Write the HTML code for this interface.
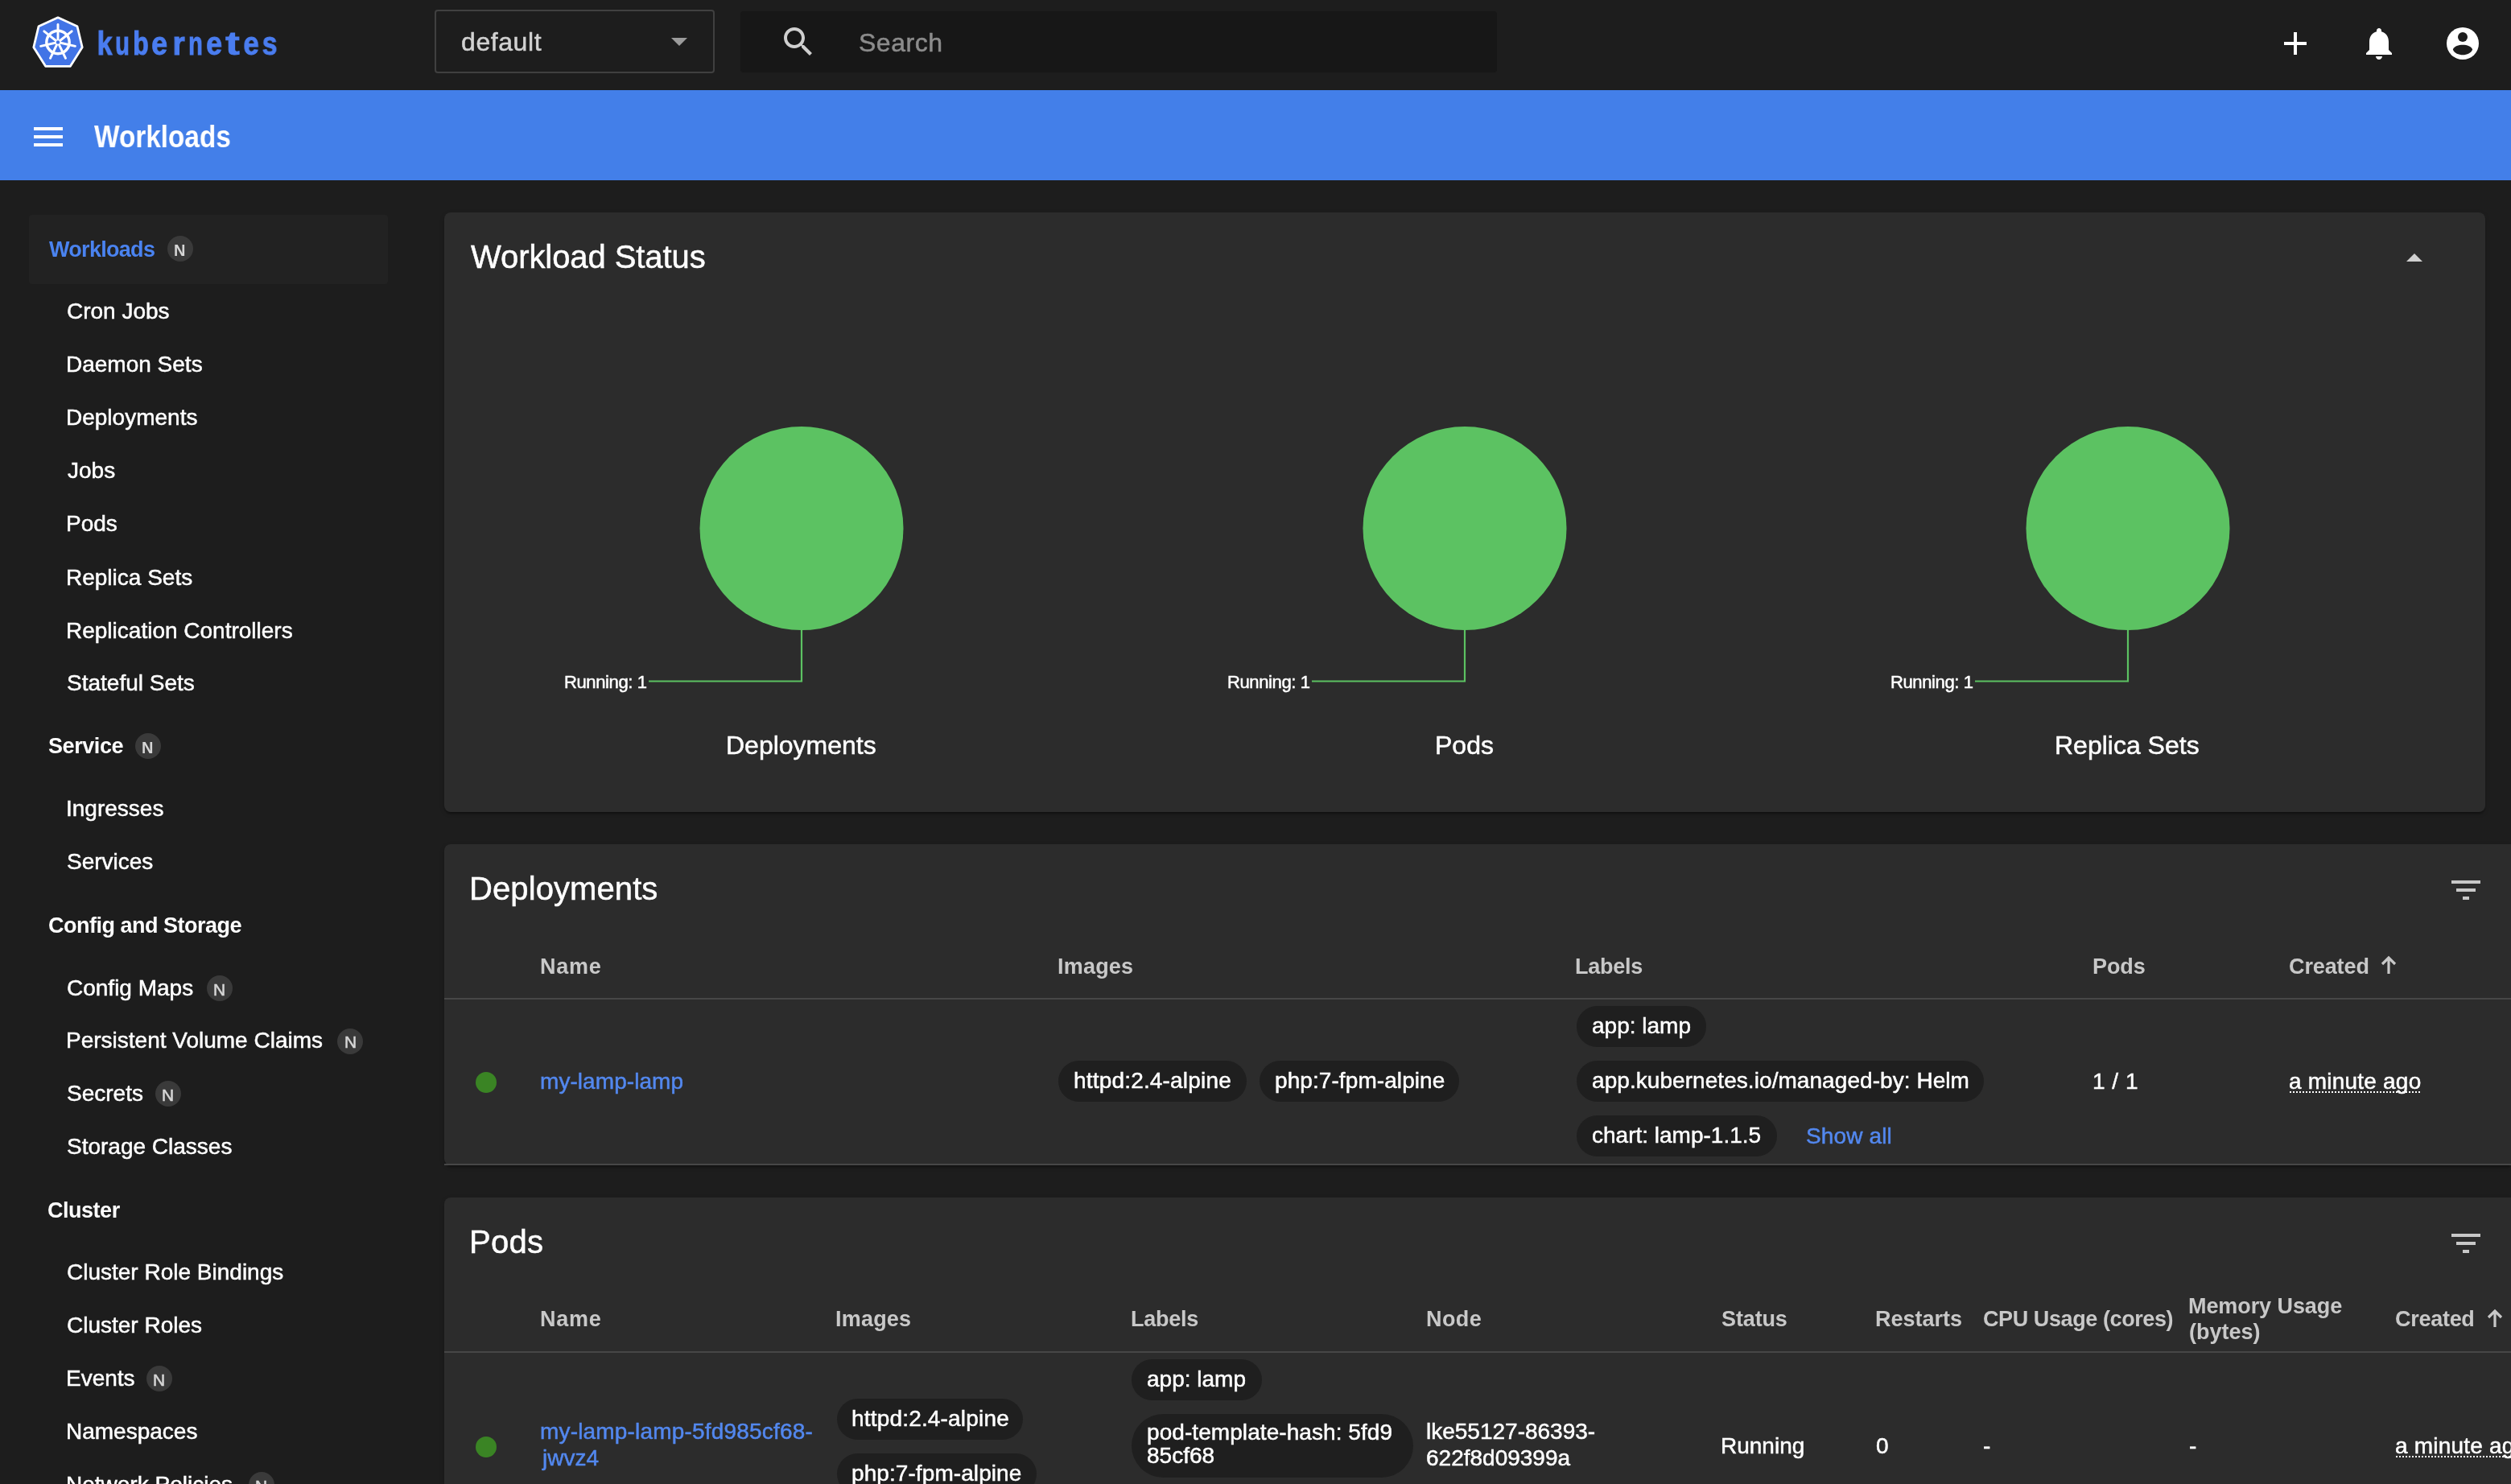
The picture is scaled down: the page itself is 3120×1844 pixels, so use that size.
<!DOCTYPE html>
<html><head><meta charset="utf-8"><title>Workloads - Kubernetes Dashboard</title>
<style>
html,body{margin:0;padding:0;width:3120px;height:1844px;overflow:hidden;background:#1d1d1d;}
#root{position:relative;width:3120px;height:1844px;overflow:hidden;background:#1d1d1d;font-family:"Liberation Sans",sans-serif;}
.t{position:absolute;line-height:1;white-space:nowrap;will-change:transform;}
.r{position:absolute;}
svg.r{overflow:visible}
</style></head><body><div id="root">
<svg class="r" style="left:38px;top:18px" width="68" height="68" viewBox="38 18 68 68">
<polygon points="72.0,21.8 96.0,32.8 102.2,58.8 87.4,82.3 56.6,82.3 41.8,58.8 48.0,32.8" fill="#4274e6" stroke="#fff" stroke-width="2.8" stroke-linejoin="round"/>
<g stroke="#fff" stroke-width="2.9" stroke-linecap="round" fill="none">
<circle cx="72" cy="52.5" r="14.2" stroke-width="3.4"/>
<line x1="72" y1="52.5" x2="72" y2="30.5"/>
<line x1="72" y1="52.5" x2="89.2" y2="38.8"/>
<line x1="72" y1="52.5" x2="93.4" y2="57.4"/>
<line x1="72" y1="52.5" x2="81.5" y2="72.3"/>
<line x1="72" y1="52.5" x2="62.5" y2="72.3"/>
<line x1="72" y1="52.5" x2="50.6" y2="57.4"/>
<line x1="72" y1="52.5" x2="54.8" y2="38.8"/>
</g>
<circle cx="72" cy="52.5" r="2.2" fill="#4274e6"/>
</svg>
<div class="t" style="left:109.5px;width:40px;text-align:center;top:34.4px;font-size:40px;font-weight:bold;color:#4a7df0;-webkit-text-stroke:1px #4a7df0;transform:scaleX(0.848)">k</div>
<div class="t" style="left:131.5px;width:40px;text-align:center;top:34.4px;font-size:40px;font-weight:bold;color:#4a7df0;-webkit-text-stroke:1px #4a7df0;transform:scaleX(0.733)">u</div>
<div class="t" style="left:155.1px;width:40px;text-align:center;top:34.4px;font-size:40px;font-weight:bold;color:#4a7df0;-webkit-text-stroke:1px #4a7df0;transform:scaleX(0.792)">b</div>
<div class="t" style="left:177.8px;width:40px;text-align:center;top:34.4px;font-size:40px;font-weight:bold;color:#4a7df0;-webkit-text-stroke:1px #4a7df0;transform:scaleX(0.886)">e</div>
<div class="t" style="left:201.7px;width:40px;text-align:center;top:34.4px;font-size:40px;font-weight:bold;color:#4a7df0;-webkit-text-stroke:1px #4a7df0;transform:scaleX(0.969)">r</div>
<div class="t" style="left:223.2px;width:40px;text-align:center;top:34.4px;font-size:40px;font-weight:bold;color:#4a7df0;-webkit-text-stroke:1px #4a7df0;transform:scaleX(0.733)">n</div>
<div class="t" style="left:246.10000000000002px;width:40px;text-align:center;top:34.4px;font-size:40px;font-weight:bold;color:#4a7df0;-webkit-text-stroke:1px #4a7df0;transform:scaleX(0.886)">e</div>
<div class="t" style="left:269px;width:40px;text-align:center;top:34.4px;font-size:40px;font-weight:bold;color:#4a7df0;-webkit-text-stroke:1px #4a7df0;transform:scaleX(1.308)">t</div>
<div class="t" style="left:292.1px;width:40px;text-align:center;top:34.4px;font-size:40px;font-weight:bold;color:#4a7df0;-webkit-text-stroke:1px #4a7df0;transform:scaleX(0.864)">e</div>
<div class="t" style="left:314.9px;width:40px;text-align:center;top:34.4px;font-size:40px;font-weight:bold;color:#4a7df0;-webkit-text-stroke:1px #4a7df0;transform:scaleX(0.841)">s</div>
<div class="r" style="left:540px;top:12px;width:348px;height:79px;background:transparent;box-sizing:border-box;border:2px solid #404040;border-radius:4px;"></div>
<div class="t" style="left:573.2px;top:36.4px;font-size:32px;color:#d2d2d2;-webkit-text-stroke:0.5px #d2d2d2;letter-spacing:0.58px;">default</div>
<svg class="r" style="left:834px;top:47px" width="20" height="10" viewBox="0 0 20 10"><polygon points="0,0 20,0 10,10" fill="#9b9b9b"/></svg>
<div class="r" style="left:920px;top:14px;width:940px;height:76px;background:#171717;border-radius:4px;"></div>
<svg class="r" style="left:968px;top:27.5px" width="48" height="48" viewBox="0 0 24 24"><path fill="#cfcfcf" d="M15.5 14h-.79l-.28-.27C15.41 12.59 16 11.11 16 9.5 16 5.91 13.09 3 9.5 3S3 5.91 3 9.5 5.91 16 9.5 16c1.61 0 3.09-.59 4.23-1.57l.27.28v.79l5 4.99L20.49 19l-4.99-5zm-6 0C7.01 14 5 11.99 5 9.5S7.01 5 9.5 5 14 7.01 14 9.5 11.99 14 9.5 14z"/></svg>
<div class="t" style="left:1066.5px;top:36.9px;font-size:32px;color:#8c8c8c;-webkit-text-stroke:0.5px #8c8c8c;letter-spacing:0.53px;">Search</div>
<svg class="r" style="left:2828px;top:30px" width="48" height="48" viewBox="0 0 24 24"><path fill="#fff" d="M19 13h-6v6h-2v-6H5v-2h6V5h2v6h6v2z"/></svg>
<svg class="r" style="left:2932px;top:30px" width="48" height="48" viewBox="0 0 24 24"><path fill="#fff" d="M12 22c1.1 0 2-.9 2-2h-4c0 1.1.89 2 2 2zm6-6v-5c0-3.07-1.64-5.64-4.5-6.32V4c0-.83-.67-1.5-1.5-1.5s-1.5.67-1.5 1.5v.68C7.63 5.36 6 7.92 6 11v5l-2 2v1h16v-1l-2-2z"/></svg>
<svg class="r" style="left:3036px;top:30px" width="48" height="48" viewBox="0 0 48 48">
<circle cx="24" cy="24" r="20" fill="#fff"/>
<circle cx="24" cy="16" r="6" fill="#1d1d1d"/>
<path d="M11.8 31.6 C14.5 23.8 33.5 23.8 36.2 31.6 C33 40.6 15 40.6 11.8 31.6Z" fill="#1d1d1d"/>
</svg>
<div class="r" style="left:0px;top:112px;width:3120px;height:112px;background:#437fe9;"></div>
<div class="r" style="left:42px;top:158px;width:36px;height:4px;background:#fff;"></div>
<div class="r" style="left:42px;top:168px;width:36px;height:4px;background:#fff;"></div>
<div class="r" style="left:42px;top:178px;width:36px;height:4px;background:#fff;"></div>
<div class="t" style="left:117.0px;top:150.6px;font-size:38px;color:#fff;transform:scaleX(0.8772);transform-origin:0 0;font-weight:bold;">Workloads</div>
<div class="r" style="left:36px;top:267px;width:446px;height:86px;background:#222222;border-radius:4px;"></div>
<div class="t" style="left:60.6px;top:296.9px;font-size:27px;color:#4a83f0;font-weight:bold;letter-spacing:-0.70px;">Workloads</div>
<div class="r" style="left:208px;top:293px;width:32px;height:32px;background:#3a3a3a;border-radius:50%;"></div>
<div class="t" style="left:216.4px;top:301.4px;font-size:20px;color:#d6d6d6;font-weight:bold;">N</div>
<div class="t" style="left:83.1px;top:373.3px;font-size:28px;color:#fff;-webkit-text-stroke:0.5px #fff;">Cron Jobs</div>
<div class="t" style="left:82.2px;top:438.8px;font-size:28px;color:#fff;-webkit-text-stroke:0.5px #fff;">Daemon Sets</div>
<div class="t" style="left:82.2px;top:504.8px;font-size:28px;color:#fff;-webkit-text-stroke:0.5px #fff;">Deployments</div>
<div class="t" style="left:84.1px;top:570.9px;font-size:28px;color:#fff;-webkit-text-stroke:0.5px #fff;">Jobs</div>
<div class="t" style="left:82.2px;top:636.9px;font-size:28px;color:#fff;-webkit-text-stroke:0.5px #fff;">Pods</div>
<div class="t" style="left:82.2px;top:703.7px;font-size:28px;color:#fff;-webkit-text-stroke:0.5px #fff;">Replica Sets</div>
<div class="t" style="left:82.2px;top:770.3px;font-size:28px;color:#fff;-webkit-text-stroke:0.5px #fff;">Replication Controllers</div>
<div class="t" style="left:83.2px;top:835.3px;font-size:28px;color:#fff;-webkit-text-stroke:0.5px #fff;">Stateful Sets</div>
<div class="t" style="left:59.9px;top:914.3px;font-size:27px;color:#fff;font-weight:bold;letter-spacing:-0.43px;">Service</div>
<div class="r" style="left:167.6px;top:911px;width:32px;height:32px;background:#3a3a3a;border-radius:50%;"></div>
<div class="t" style="left:176.0px;top:919.4px;font-size:20px;color:#d6d6d6;font-weight:bold;">N</div>
<div class="t" style="left:81.9px;top:990.8px;font-size:28px;color:#fff;-webkit-text-stroke:0.5px #fff;">Ingresses</div>
<div class="t" style="left:83.2px;top:1057.3px;font-size:28px;color:#fff;-webkit-text-stroke:0.5px #fff;">Services</div>
<div class="t" style="left:59.6px;top:1136.9px;font-size:27px;color:#fff;font-weight:bold;letter-spacing:-0.50px;">Config and Storage</div>
<div class="t" style="left:83.1px;top:1213.6px;font-size:28px;color:#fff;-webkit-text-stroke:0.5px #fff;">Config Maps</div>
<div class="r" style="left:256.8px;top:1211.8px;width:32px;height:32px;background:#3a3a3a;border-radius:50%;"></div>
<div class="t" style="left:265.1px;top:1218.5px;font-size:21px;color:#d6d6d6;-webkit-text-stroke:0.5px #d6d6d6;">N</div>
<div class="t" style="left:82.2px;top:1279.3px;font-size:28px;color:#fff;-webkit-text-stroke:0.5px #fff;">Persistent Volume Claims</div>
<div class="r" style="left:419.4px;top:1277.5px;width:32px;height:32px;background:#3a3a3a;border-radius:50%;"></div>
<div class="t" style="left:427.7px;top:1284.2px;font-size:21px;color:#d6d6d6;-webkit-text-stroke:0.5px #d6d6d6;">N</div>
<div class="t" style="left:83.2px;top:1345.1px;font-size:28px;color:#fff;-webkit-text-stroke:0.5px #fff;">Secrets</div>
<div class="r" style="left:192.8px;top:1343.3px;width:32px;height:32px;background:#3a3a3a;border-radius:50%;"></div>
<div class="t" style="left:201.1px;top:1350.0px;font-size:21px;color:#d6d6d6;-webkit-text-stroke:0.5px #d6d6d6;">N</div>
<div class="t" style="left:83.2px;top:1411.3px;font-size:28px;color:#fff;-webkit-text-stroke:0.5px #fff;">Storage Classes</div>
<div class="t" style="left:59.3px;top:1491.2px;font-size:27px;color:#fff;font-weight:bold;letter-spacing:-0.48px;">Cluster</div>
<div class="t" style="left:83.1px;top:1567.0px;font-size:28px;color:#fff;-webkit-text-stroke:0.5px #fff;">Cluster Role Bindings</div>
<div class="t" style="left:83.1px;top:1632.8px;font-size:28px;color:#fff;-webkit-text-stroke:0.5px #fff;">Cluster Roles</div>
<div class="t" style="left:82.2px;top:1698.6px;font-size:28px;color:#fff;-webkit-text-stroke:0.5px #fff;">Events</div>
<div class="r" style="left:181.7px;top:1696.8px;width:32px;height:32px;background:#3a3a3a;border-radius:50%;"></div>
<div class="t" style="left:190.0px;top:1703.5px;font-size:21px;color:#d6d6d6;-webkit-text-stroke:0.5px #d6d6d6;">N</div>
<div class="t" style="left:82.2px;top:1764.8px;font-size:28px;color:#fff;-webkit-text-stroke:0.5px #fff;">Namespaces</div>
<div class="t" style="left:82.2px;top:1830.8px;font-size:28px;color:#fff;-webkit-text-stroke:0.5px #fff;">Network Policies</div>
<div class="r" style="left:308.5px;top:1829.0px;width:32px;height:32px;background:#3a3a3a;border-radius:50%;"></div>
<div class="t" style="left:316.8px;top:1835.7px;font-size:21px;color:#d6d6d6;-webkit-text-stroke:0.5px #d6d6d6;">N</div>
<div class="r" style="left:552px;top:264px;width:2536px;height:745px;background:#2c2c2c;border-radius:8px;box-shadow:0 4px 2px -2px rgba(0,0,0,.2),0 2px 2px 0 rgba(0,0,0,.14),0 2px 6px 0 rgba(0,0,0,.12);"></div>
<div class="t" style="left:584.6px;top:299.3px;font-size:40px;color:#fff;-webkit-text-stroke:0.5px #fff;letter-spacing:-0.07px;">Workload Status</div>
<svg class="r" style="left:2990px;top:315px" width="20" height="10" viewBox="0 0 20 10"><polygon points="0,10 20,10 10,0" fill="#d0d0d0"/></svg>
<svg class="r" style="left:796px;top:520px" width="340" height="340" viewBox="796 520 340 340"><circle cx="996" cy="656.6" r="126.5" fill="#5cc262"/><polyline points="996,783 996,846.5 806,846.5" fill="none" stroke="#5cc262" stroke-width="2.2"/></svg>
<div class="t" style="left:701.2px;top:836.9px;font-size:22px;color:#fff;-webkit-text-stroke:0.5px #fff;letter-spacing:-0.39px;">Running: 1</div>
<div class="t" style="left:901.9px;top:909.9px;font-size:32px;color:#fff;-webkit-text-stroke:0.5px #fff;">Deployments</div>
<svg class="r" style="left:1620px;top:520px" width="340" height="340" viewBox="1620 520 340 340"><circle cx="1820" cy="656.6" r="126.5" fill="#5cc262"/><polyline points="1820,783 1820,846.5 1630,846.5" fill="none" stroke="#5cc262" stroke-width="2.2"/></svg>
<div class="t" style="left:1525.2px;top:836.9px;font-size:22px;color:#fff;-webkit-text-stroke:0.5px #fff;letter-spacing:-0.39px;">Running: 1</div>
<div class="t" style="left:1782.8px;top:909.9px;font-size:32px;color:#fff;-webkit-text-stroke:0.5px #fff;">Pods</div>
<svg class="r" style="left:2444px;top:520px" width="340" height="340" viewBox="2444 520 340 340"><circle cx="2644" cy="656.6" r="126.5" fill="#5cc262"/><polyline points="2644,783 2644,846.5 2454,846.5" fill="none" stroke="#5cc262" stroke-width="2.2"/></svg>
<div class="t" style="left:2349.2px;top:836.9px;font-size:22px;color:#fff;-webkit-text-stroke:0.5px #fff;letter-spacing:-0.39px;">Running: 1</div>
<div class="t" style="left:2553.4px;top:909.9px;font-size:32px;color:#fff;-webkit-text-stroke:0.5px #fff;">Replica Sets</div>
<div class="r" style="left:552px;top:1049px;width:2568px;height:399px;background:#2c2c2c;border-radius:8px 0 0 8px;box-shadow:0 4px 2px -2px rgba(0,0,0,.2),0 2px 2px 0 rgba(0,0,0,.14),0 2px 6px 0 rgba(0,0,0,.12);"></div>
<div class="t" style="left:582.9px;top:1083.9px;font-size:40px;color:#fff;-webkit-text-stroke:0.5px #fff;letter-spacing:0.09px;">Deployments</div>
<svg class="r" style="left:3040px;top:1082px" width="48" height="48" viewBox="0 0 24 24"><path fill="#c8c8c8" d="M10 18h4v-2h-4v2zM3 6v2h18V6H3zm3 7h12v-2H6v2z"/></svg>
<div class="t" style="left:671.2px;top:1187.9px;font-size:27px;color:#c8c8c8;font-weight:bold;letter-spacing:0.73px;">Name</div>
<div class="t" style="left:1314.2px;top:1187.9px;font-size:27px;color:#c8c8c8;font-weight:bold;letter-spacing:0.21px;">Images</div>
<div class="t" style="left:1957.2px;top:1187.9px;font-size:27px;color:#c8c8c8;font-weight:bold;letter-spacing:-0.24px;">Labels</div>
<div class="t" style="left:2600.2px;top:1187.9px;font-size:27px;color:#c8c8c8;font-weight:bold;letter-spacing:-0.10px;">Pods</div>
<div class="t" style="left:2843.9px;top:1187.9px;font-size:27px;color:#c8c8c8;font-weight:bold;letter-spacing:-0.11px;">Created</div>
<svg class="r" style="left:2957.5px;top:1188.5px" width="20" height="22" viewBox="0 0 20 22"><path d="M10 1 L10 21 M2 9 L10 1 L18 9" fill="none" stroke="#c8c8c8" stroke-width="3.2" stroke-linejoin="miter"/></svg>
<div class="r" style="left:552px;top:1240px;width:2568px;height:2px;background:#474747;"></div>
<div class="r" style="left:591px;top:1332px;width:26px;height:26px;background:#3a8424;border-radius:50%;"></div>
<div class="t" style="left:671.1px;top:1330.3px;font-size:28px;color:#5388ef;-webkit-text-stroke:0.5px #5388ef;letter-spacing:0.06px;">my-lamp-lamp</div>
<div class="r" style="left:1315.4px;top:1318px;width:233.39999999999986px;height:51.40000000000009px;background:#1f1f1f;border-radius:25.700000000000045px;"></div>
<div class="t" style="left:1334.1px;top:1329.3px;font-size:28px;color:#fff;-webkit-text-stroke:0.5px #fff;letter-spacing:0.18px;">httpd:2.4-alpine</div>
<div class="r" style="left:1564.8px;top:1318px;width:248.5px;height:51.40000000000009px;background:#1f1f1f;border-radius:25.700000000000045px;"></div>
<div class="t" style="left:1583.6px;top:1329.3px;font-size:28px;color:#fff;-webkit-text-stroke:0.5px #fff;letter-spacing:0.08px;">php:7-fpm-alpine</div>
<div class="r" style="left:1958.7px;top:1250.4px;width:161.29999999999995px;height:50.59999999999991px;background:#1f1f1f;border-radius:25.299999999999955px;"></div>
<div class="t" style="left:1977.8px;top:1261.3px;font-size:28px;color:#fff;-webkit-text-stroke:0.5px #fff;">app: lamp</div>
<div class="r" style="left:1958.7px;top:1318px;width:506.4999999999998px;height:51.40000000000009px;background:#1f1f1f;border-radius:25.700000000000045px;"></div>
<div class="t" style="left:1977.8px;top:1329.3px;font-size:28px;color:#fff;-webkit-text-stroke:0.5px #fff;letter-spacing:0.06px;">app.kubernetes.io/managed-by: Helm</div>
<div class="r" style="left:1958.7px;top:1386px;width:249.70000000000005px;height:50.700000000000045px;background:#1f1f1f;border-radius:25.350000000000023px;"></div>
<div class="t" style="left:1977.8px;top:1397.3px;font-size:28px;color:#fff;-webkit-text-stroke:0.5px #fff;">chart: lamp-1.1.5</div>
<div class="t" style="left:2243.7px;top:1397.5px;font-size:28px;color:#5388ef;-webkit-text-stroke:0.5px #5388ef;letter-spacing:0.13px;">Show all</div>
<div class="t" style="left:2599.9px;top:1330.3px;font-size:28px;color:#fff;-webkit-text-stroke:0.5px #fff;letter-spacing:0.50px;">1 / 1</div>
<div class="t" style="left:2843.8px;top:1330.3px;font-size:28px;color:#fff;-webkit-text-stroke:0.5px #fff;letter-spacing:0.21px;">a minute ago</div>
<div class="r" style="left:2845px;top:1356px;width:162px;height:2px;background:transparent;border-top:2px dotted #fff;box-sizing:border-box;"></div>
<div class="r" style="left:552px;top:1446px;width:2568px;height:2px;background:#474747;"></div>
<div class="r" style="left:552px;top:1488px;width:2568px;height:356px;background:#2c2c2c;border-radius:8px 0 0 0;box-shadow:0 4px 2px -2px rgba(0,0,0,.2),0 2px 2px 0 rgba(0,0,0,.14),0 2px 6px 0 rgba(0,0,0,.12);"></div>
<div class="t" style="left:582.7px;top:1523.1px;font-size:40px;color:#fff;-webkit-text-stroke:0.5px #fff;letter-spacing:0.28px;">Pods</div>
<svg class="r" style="left:3040px;top:1521px" width="48" height="48" viewBox="0 0 24 24"><path fill="#c8c8c8" d="M10 18h4v-2h-4v2zM3 6v2h18V6H3zm3 7h12v-2H6v2z"/></svg>
<div class="t" style="left:671.2px;top:1626.3px;font-size:27px;color:#c8c8c8;font-weight:bold;letter-spacing:0.73px;">Name</div>
<div class="t" style="left:1038.2px;top:1626.3px;font-size:27px;color:#c8c8c8;font-weight:bold;letter-spacing:0.21px;">Images</div>
<div class="t" style="left:1405.2px;top:1626.3px;font-size:27px;color:#c8c8c8;font-weight:bold;letter-spacing:-0.24px;">Labels</div>
<div class="t" style="left:1772.2px;top:1626.3px;font-size:27px;color:#c8c8c8;font-weight:bold;letter-spacing:0.41px;">Node</div>
<div class="t" style="left:2139.2px;top:1626.3px;font-size:27px;color:#c8c8c8;font-weight:bold;letter-spacing:-0.13px;">Status</div>
<div class="t" style="left:2330.2px;top:1626.3px;font-size:27px;color:#c8c8c8;font-weight:bold;">Restarts</div>
<div class="t" style="left:2464.3px;top:1626.3px;font-size:27px;color:#c8c8c8;font-weight:bold;letter-spacing:-0.41px;">CPU Usage (cores)</div>
<div class="t" style="left:2719.2px;top:1610.4px;font-size:27px;color:#c8c8c8;font-weight:bold;letter-spacing:-0.08px;">Memory Usage</div>
<div class="t" style="left:2719.7px;top:1641.9px;font-size:27px;color:#c8c8c8;font-weight:bold;">(bytes)</div>
<div class="t" style="left:2975.9px;top:1626.3px;font-size:27px;color:#c8c8c8;font-weight:bold;letter-spacing:-0.28px;">Created</div>
<svg class="r" style="left:3089.6px;top:1627.5px" width="20" height="22" viewBox="0 0 20 22"><path d="M10 1 L10 21 M2 9 L10 1 L18 9" fill="none" stroke="#c8c8c8" stroke-width="3.2" stroke-linejoin="miter"/></svg>
<div class="r" style="left:552px;top:1679px;width:2568px;height:2px;background:#474747;"></div>
<div class="r" style="left:591px;top:1785px;width:26px;height:26px;background:#3a8424;border-radius:50%;"></div>
<div class="t" style="left:671.1px;top:1764.7px;font-size:28px;color:#5388ef;-webkit-text-stroke:0.5px #5388ef;letter-spacing:0.18px;">my-lamp-lamp-5fd985cf68-</div>
<div class="t" style="left:673.7px;top:1798.3px;font-size:28px;color:#5388ef;-webkit-text-stroke:0.5px #5388ef;">jwvz4</div>
<div class="r" style="left:1039.8px;top:1737.7px;width:231.0px;height:51.0px;background:#1f1f1f;border-radius:25.5px;"></div>
<div class="t" style="left:1058.1px;top:1749.3px;font-size:28px;color:#fff;-webkit-text-stroke:0.5px #fff;letter-spacing:0.18px;">httpd:2.4-alpine</div>
<div class="r" style="left:1039.8px;top:1805.5px;width:248.5px;height:51.0px;background:#1f1f1f;border-radius:25.5px;"></div>
<div class="t" style="left:1058.2px;top:1817.3px;font-size:28px;color:#fff;-webkit-text-stroke:0.5px #fff;letter-spacing:0.08px;">php:7-fpm-alpine</div>
<div class="r" style="left:1406px;top:1689.3px;width:161.70000000000005px;height:50.700000000000045px;background:#1f1f1f;border-radius:25.350000000000023px;"></div>
<div class="t" style="left:1425.3px;top:1700.3px;font-size:28px;color:#fff;-webkit-text-stroke:0.5px #fff;">app: lamp</div>
<div class="r" style="left:1406px;top:1757.4px;width:349.5999999999999px;height:79.09999999999991px;background:#1f1f1f;border-radius:39.549999999999955px;"></div>
<div class="t" style="left:1424.7px;top:1766.3px;font-size:28px;color:#fff;-webkit-text-stroke:0.5px #fff;letter-spacing:0.07px;">pod-template-hash: 5fd9</div>
<div class="t" style="left:1425.3px;top:1795.3px;font-size:28px;color:#fff;-webkit-text-stroke:0.5px #fff;">85cf68</div>
<div class="t" style="left:1771.6px;top:1765.3px;font-size:28px;color:#fff;-webkit-text-stroke:0.5px #fff;">lke55127-86393-</div>
<div class="t" style="left:1772.1px;top:1798.3px;font-size:28px;color:#fff;-webkit-text-stroke:0.5px #fff;">622f8d09399a</div>
<div class="t" style="left:2137.7px;top:1783.3px;font-size:28px;color:#fff;-webkit-text-stroke:0.5px #fff;">Running</div>
<div class="t" style="left:2330.9px;top:1783.3px;font-size:28px;color:#fff;-webkit-text-stroke:0.5px #fff;">0</div>
<div class="t" style="left:2463.8px;top:1783.3px;font-size:28px;color:#fff;-webkit-text-stroke:0.5px #fff;">-</div>
<div class="t" style="left:2719.8px;top:1783.3px;font-size:28px;color:#fff;-webkit-text-stroke:0.5px #fff;">-</div>
<div class="t" style="left:2975.8px;top:1782.6px;font-size:28px;color:#fff;-webkit-text-stroke:0.5px #fff;letter-spacing:0.21px;">a minute ago</div>
<div class="r" style="left:2977px;top:1808.5px;width:162px;height:2px;background:transparent;border-top:2px dotted #fff;box-sizing:border-box;"></div>
</div></body></html>
